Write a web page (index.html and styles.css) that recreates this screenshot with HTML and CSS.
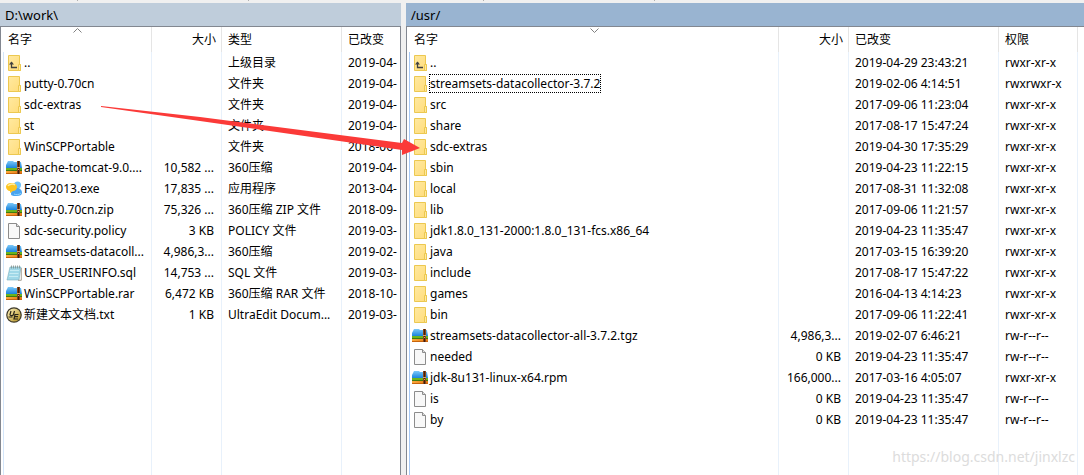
FILE: index.html
```html
<!DOCTYPE html>
<html lang="zh-CN">
<head>
    <meta charset="UTF-8">
    <meta name="viewport" content="width=device-width, initial-scale=1.0">
    <title>/usr/ - WinSCP</title>
    <link rel="stylesheet" href="styles.css">
</head>
<body>
    <svg class="sprite" aria-hidden="true">
        <defs>
            <linearGradient id="gFolder" x1="0" y1="0" x2="1" y2="1">
                <stop offset="0" stop-color="#ffe9a0"/>
                <stop offset="1" stop-color="#ffdc7a"/>
            </linearGradient>
            <linearGradient id="gBlue" x1="0" y1="0" x2="0" y2="1">
                <stop offset="0" stop-color="#7cc8f8"/>
                <stop offset="1" stop-color="#1a84dc"/>
            </linearGradient>
            <linearGradient id="gOrange" x1="0" y1="0" x2="1" y2="0">
                <stop offset="0" stop-color="#fcaa3c"/>
                <stop offset="1" stop-color="#e47814"/>
            </linearGradient>
            <linearGradient id="gGold" x1="0" y1="0" x2="1" y2="1">
                <stop offset="0" stop-color="#fff4c0"/>
                <stop offset="1" stop-color="#b08c1c"/>
            </linearGradient>
        </defs>
        <symbol id="folder" viewBox="0 0 16 16">
            <path d="M2.5.5h11v9h1v6h-12z" fill="url(#gFolder)" stroke="#ecc850"/>
            <path d="M12.5 15V9.500h2v6h-2z" fill="#ffe9a0" stroke="#ecc850"/>
        </symbol>
        <symbol id="up" viewBox="0 0 16 16">
            <use href="#folder"/>
            <path d="M5.500 7v5.500H11" fill="none" stroke="#404040" stroke-width="1.300"/>
            <path d="M3 9.500 5.500 6.500 8 9.500z" fill="#404040"/>
        </symbol>
        <symbol id="file" viewBox="0 0 16 16">
            <path d="M2.500.5h8l3 3v12h-11z" fill="#f8f8f8" stroke="#8c8c8c"/>
            <path d="M10.500.5v3h3" fill="#ddd" stroke="#8c8c8c"/>
        </symbol>
        <symbol id="zip" viewBox="0 0 16 16">
            <path d="M2 1h5l1 1h7l1 6H0V5z" fill="url(#gBlue)"/>
            <path d="M0 8h16v2H0z" fill="#6cb41c"/>
            <path d="M0 10h16v1H0z" fill="#3c7c10"/>
            <path d="M0 11h16v3H0z" fill="url(#gOrange)"/>
            <path d="M0 13h16v1H0z" fill="#c8640c"/>
            <path d="M11 1h3v13h-3z" fill="#8a4418"/>
            <path d="M12 1h1v13h-1z" fill="#40200c"/>
            <path d="M11 7h3v1h-3zM12 9h1v1h-1z" fill="#d8a070"/>
        </symbol>
        <symbol id="chat" viewBox="0 0 16 16">
            <circle cx="11.500" cy="4" r="3.500" fill="#6cc0f8"/>
            <path d="M5 13c0-4 3-6 6-6s5 2 5 5c0 2-2 3-5 3s-6 0-6-2z" fill="#48a4f0"/>
            <path d="M8 13c2 1 5 1 7-1" fill="none" stroke="#90d4fc"/>
            <path d="M0 6c0-2.500 2.500-4 5.500-4S11 3.500 11 6s-2 4-4 4l-3 2v-2C2 10 0 8 0 6z" fill="#fcc420"/>
            <path d="M2 5c1-2 5-2.500 7-1" fill="none" stroke="#ffeea0" stroke-width="1.500"/>
        </symbol>
        <symbol id="note" viewBox="0 0 16 16">
            <path d="M4 2h11l-2 13H1z" fill="#a0d8e8" stroke="#7cb0c0" stroke-width=".6"/>
            <path d="M4 5.500h9M3.500 8.500h9M3 11.500h9" stroke="#c8ecf4" stroke-width="1"/>
            <path d="M5.500.5v3M7.500.5v3M9.500.5v3M11.500.5v3M13.500.5v3" stroke="#80908c" stroke-width=".8"/>
            <path d="M15.300 3v12.300H12" fill="none" stroke="#a8a094"/>
        </symbol>
        <symbol id="ultra" viewBox="0 0 16 16">
            <circle cx="8" cy="8" r="7.800" fill="#3c3828"/>
            <circle cx="8" cy="8" r="6.600" fill="url(#gGold)"/>
            <path d="M5 4 4 7.500c0 1.500 3 1.500 3.500 0L8.500 4M12.500 7.500H9l-1 4.500h4M9 9.700h3M2.500 10h4" fill="none" stroke="#282418" stroke-width="1.200"/>
        </symbol>
    </svg>

    <div class="toolbar">
        <div class="group"></div>
        <div class="group"></div>
    </div>
    <main class="panes">
        <section class="pane local">
            <h2 class="path">D:\work\</h2>
            <div class="list">
                <table>
                    <colgroup>
                        <col class="c-name"><col class="c-size"><col class="c-type"><col>
                    </colgroup>
                    <thead>
                        <tr>
                            <th aria-sort="ascending"><button>名字</button><svg class="sort" viewBox="0 0 9 5"><path d="M.5 4.500l4-4 4 4"/></svg></th>
                            <th class="num"><button>大小</button></th>
                            <th><button>类型</button></th>
                            <th><button>已改变</button></th>
                        </tr>
                    </thead>
                    <tbody>
                        <tr><td><svg class="icon"><use href="#up"/></svg><span>..</span></td><td class="num"></td><td>上级目录</td><td>2019-04-</td></tr>
                        <tr><td><svg class="icon"><use href="#folder"/></svg><span>putty-0.70cn</span></td><td class="num"></td><td>文件夹</td><td>2019-04-</td></tr>
                        <tr><td><svg class="icon"><use href="#folder"/></svg><span>sdc-extras</span></td><td class="num"></td><td>文件夹</td><td>2019-04-</td></tr>
                        <tr><td><svg class="icon"><use href="#folder"/></svg><span>st</span></td><td class="num"></td><td>文件夹</td><td>2019-04-</td></tr>
                        <tr><td><svg class="icon"><use href="#folder"/></svg><span>WinSCPPortable</span></td><td class="num"></td><td>文件夹</td><td>2018-06-</td></tr>
                        <tr><td><svg class="icon"><use href="#zip"/></svg><span>apache-tomcat-9.0....</span></td><td class="num">10,582 ...</td><td>360压缩</td><td>2019-04-</td></tr>
                        <tr><td><svg class="icon"><use href="#chat"/></svg><span>FeiQ2013.exe</span></td><td class="num">17,835 ...</td><td>应用程序</td><td>2013-04-</td></tr>
                        <tr><td><svg class="icon"><use href="#zip"/></svg><span>putty-0.70cn.zip</span></td><td class="num">75,326 ...</td><td>360压缩 ZIP 文件</td><td>2018-09-</td></tr>
                        <tr><td><svg class="icon"><use href="#file"/></svg><span>sdc-security.policy</span></td><td class="num">3 KB</td><td>POLICY 文件</td><td>2019-03-</td></tr>
                        <tr><td><svg class="icon"><use href="#zip"/></svg><span>streamsets-datacoll...</span></td><td class="num">4,986,3...</td><td>360压缩</td><td>2019-02-</td></tr>
                        <tr><td><svg class="icon"><use href="#note"/></svg><span>USER_USERINFO.sql</span></td><td class="num">14,753 ...</td><td>SQL 文件</td><td>2019-03-</td></tr>
                        <tr><td><svg class="icon"><use href="#zip"/></svg><span>WinSCPPortable.rar</span></td><td class="num">6,472 KB</td><td>360压缩 RAR 文件</td><td>2018-10-</td></tr>
                        <tr><td><svg class="icon"><use href="#ultra"/></svg><span>新建文本文档.txt</span></td><td class="num">1 KB</td><td>UltraEdit Docum...</td><td>2019-03-</td></tr>
                        <tr class="rest"><td></td><td></td><td></td><td></td></tr>
                    </tbody>
                </table>
            </div>
        </section>

        <section class="pane remote">
            <h2 class="path">/usr/</h2>
            <div class="list">
                <table>
                    <colgroup>
                        <col><col class="c-size"><col class="c-date"><col class="c-perm"><col class="c-end">
                    </colgroup>
                    <thead>
                        <tr>
                            <th aria-sort="descending"><button>名字</button><svg class="sort" viewBox="0 0 9 5"><path d="M.5.5l4 4 4-4"/></svg></th>
                            <th class="num"><button>大小</button></th>
                            <th><button>已改变</button></th>
                            <th><button>权限</button></th>
                            <td></td>
                        </tr>
                    </thead>
                    <tbody>
                        <tr><td><svg class="icon"><use href="#up"/></svg><span>..</span></td><td class="num"></td><td>2019-04-29 23:43:21</td><td>rwxr-xr-x</td><td></td></tr>
                        <tr><td><svg class="icon"><use href="#folder"/></svg><span class="focused">streamsets-datacollector-3.7.2</span></td><td class="num"></td><td>2019-02-06 4:14:51</td><td>rwxrwxr-x</td><td></td></tr>
                        <tr><td><svg class="icon"><use href="#folder"/></svg><span>src</span></td><td class="num"></td><td>2017-09-06 11:23:04</td><td>rwxr-xr-x</td><td></td></tr>
                        <tr><td><svg class="icon"><use href="#folder"/></svg><span>share</span></td><td class="num"></td><td>2017-08-17 15:47:24</td><td>rwxr-xr-x</td><td></td></tr>
                        <tr><td><svg class="icon"><use href="#folder"/></svg><span>sdc-extras</span></td><td class="num"></td><td>2019-04-30 17:35:29</td><td>rwxr-xr-x</td><td></td></tr>
                        <tr><td><svg class="icon"><use href="#folder"/></svg><span>sbin</span></td><td class="num"></td><td>2019-04-23 11:22:15</td><td>rwxr-xr-x</td><td></td></tr>
                        <tr><td><svg class="icon"><use href="#folder"/></svg><span>local</span></td><td class="num"></td><td>2017-08-31 11:32:08</td><td>rwxr-xr-x</td><td></td></tr>
                        <tr><td><svg class="icon"><use href="#folder"/></svg><span>lib</span></td><td class="num"></td><td>2017-09-06 11:21:57</td><td>rwxr-xr-x</td><td></td></tr>
                        <tr><td><svg class="icon"><use href="#folder"/></svg><span>jdk1.8.0_131-2000:1.8.0_131-fcs.x86_64</span></td><td class="num"></td><td>2019-04-23 11:35:47</td><td>rwxr-xr-x</td><td></td></tr>
                        <tr><td><svg class="icon"><use href="#folder"/></svg><span>java</span></td><td class="num"></td><td>2017-03-15 16:39:20</td><td>rwxr-xr-x</td><td></td></tr>
                        <tr><td><svg class="icon"><use href="#folder"/></svg><span>include</span></td><td class="num"></td><td>2017-08-17 15:47:22</td><td>rwxr-xr-x</td><td></td></tr>
                        <tr><td><svg class="icon"><use href="#folder"/></svg><span>games</span></td><td class="num"></td><td>2016-04-13 4:14:23</td><td>rwxr-xr-x</td><td></td></tr>
                        <tr><td><svg class="icon"><use href="#folder"/></svg><span>bin</span></td><td class="num"></td><td>2017-09-06 11:22:41</td><td>rwxr-xr-x</td><td></td></tr>
                        <tr><td><svg class="icon"><use href="#zip"/></svg><span>streamsets-datacollector-all-3.7.2.tgz</span></td><td class="num">4,986,3...</td><td>2019-02-07 6:46:21</td><td>rw-r--r--</td><td></td></tr>
                        <tr><td><svg class="icon"><use href="#file"/></svg><span>needed</span></td><td class="num">0 KB</td><td>2019-04-23 11:35:47</td><td>rw-r--r--</td><td></td></tr>
                        <tr><td><svg class="icon"><use href="#zip"/></svg><span>jdk-8u131-linux-x64.rpm</span></td><td class="num">166,000...</td><td>2017-03-16 4:05:07</td><td>rwxr-xr-x</td><td></td></tr>
                        <tr><td><svg class="icon"><use href="#file"/></svg><span>is</span></td><td class="num">0 KB</td><td>2019-04-23 11:35:47</td><td>rw-r--r--</td><td></td></tr>
                        <tr><td><svg class="icon"><use href="#file"/></svg><span>by</span></td><td class="num">0 KB</td><td>2019-04-23 11:35:47</td><td>rw-r--r--</td><td></td></tr>
                        <tr class="rest"><td></td><td></td><td></td><td></td><td></td></tr>
                    </tbody>
                </table>
            </div>
        </section>
    </main>

    <svg class="arrow" viewBox="0 0 320 54" aria-hidden="true">
        <path d="M1 4 100 15 302 41 304 37 320 46 302 53V48L100 19 1 5z"/>
    </svg>
    <p class="watermark">https://blog.csdn.net/jinxlzc</p>
</body>
</html>
```
FILE: styles.css
```css
* {
    box-sizing: border-box;
}
body {
    margin: 0;
    min-height: 100vh;
    display: flex;
    flex-direction: column;
    position: relative;
    background-color: #f0f0f0;
    color: #000;
    font-family: "Noto Sans", "Noto Sans CJK SC", sans-serif;
    font-size: 12px;
    line-height: 20px;
}
.sprite {
    position: absolute;
    width: 0;
    height: 0;
}
.toolbar, .panes {
    display: grid;
    grid-template-columns: minmax(0, 401fr) minmax(0, 678fr);
    gap: 5px;
}
.toolbar {
    height: 3px;
}
/* lower ends of the toolbar separators */
.group {
    display: flex;
    height: 1px;
}
.group::before, .group::after {
    content: "";
    width: 77px;
    border-right: 1px solid #b0b0b0;
}
.group::after {
    width: 170px;
}
.panes {
    flex: 1;
}
.pane {
    display: flex;
    flex-direction: column;
    min-width: 0;
}
.path {
    margin: 0;
    padding: 2px 5px;
    height: 23px;
    font-size: 13px;
    font-weight: normal;
    background-color: #bfcddb;
}
.remote .path {
    background-color: #99b4d1;
}
.list {
    flex: 1;
    display: flex;
    overflow: hidden;
    padding-left: 2px;
    background-color: #fff;
    border: 1px solid #828790;
    border-bottom: none;
}
.remote .list {
    border-right: none;
}
table {
    width: 100%;
    table-layout: fixed;
    border-collapse: separate;
    border-spacing: 0;
}
.c-name {
    width: 149px;
}
.c-size {
    width: 70px;
}
.c-type {
    width: 120px;
}
.c-date {
    width: 150px;
}
.c-perm {
    width: 79px;
}
.c-end {
    width: 6px;
}
th, td {
    height: 21px;
    padding: 0 0 0 6px;
    border-right: 1px solid #e8f1fb;
    font-weight: normal;
    text-align: left;
    white-space: nowrap;
    overflow: hidden;
}
th {
    height: 25px;
    border-right-color: #e5e5e5;
    position: relative;
}
th:first-child {
    padding-left: 5px;
}
tbody td:first-child {
    padding-left: 2px;
    border-left: 1px solid #d4e6fa;
}
.remote tbody td:first-child {
    border-left-color: #a6c8f5;
}
th:last-child, td:last-child {
    border-right: none;
}
.num {
    padding: 0 5px 0 0;
    text-align: right;
}
td.num {
    padding-right: 7px;
}
.rest td {
    height: auto;
}
button {
    padding: 0;
    border: none;
    background: none;
    color: inherit;
    font: inherit;
    cursor: pointer;
}
.sort {
    position: absolute;
    top: 1px;
    left: calc(50% - 4px);
    width: 9px;
    height: 5px;
    fill: none;
    stroke: #808080;
}
.icon {
    width: 16px;
    height: 16px;
    margin-right: 2px;
    vertical-align: middle;
}
td span {
    vertical-align: middle;
}
.focused {
    outline: 1px dotted #000;
}
.arrow {
    position: absolute;
    left: 100px;
    top: 102px;
    width: 320px;
    height: 54px;
    fill: #fb3a38;
}
.watermark {
    position: absolute;
    right: 9px;
    bottom: 8px;
    margin: 0;
    color: #dcdcdc;
    font-size: 14px;
}
```
